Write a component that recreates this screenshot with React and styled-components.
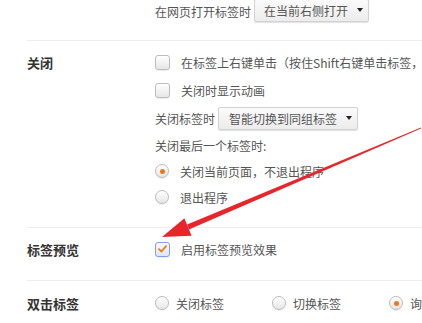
import styled, { createGlobalStyle, css } from "styled-components";

const GlobalStyle = createGlobalStyle`
html, body {
    margin: 0;
    padding: 0;
    background: #ffffff;
    overflow: hidden;
}
body {
    font-family: "Noto Sans CJK SC", "Noto Sans", sans-serif;
    font-size: 12px;
    color: #555;
}
`;

const Page = styled.div`
position: relative;
width: 422px;
height: 323px;
overflow: hidden;
white-space: nowrap;
`;

const Section = styled.div`
display: grid;
grid-template-columns: 128px 1fr;
margin-left: 27px;
padding: ${(p) => p.$pad || "7px 0 17px"};
border-top: ${(p) => (p.$first ? "none" : "1px solid #ededed")};
`;

const Label = styled.div`
height: 28px;
display: flex;
align-items: center;
font-size: 13px;
font-weight: bold;
color: #333;
`;

const Options = styled.div`
display: flex;
flex-direction: column;
min-width: 0;
`;

const Row = styled.div`
display: flex;
align-items: center;
height: ${(p) => p.$h || 28}px;
gap: ${(p) => p.$gap || 0}px;
`;

const Text = styled.span`
color: #555;
font-size: 12px;
`;

const Select = styled.div`
display: inline-flex;
align-items: center;
box-sizing: border-box;
height: 23px;
padding: 0 5px 0 ${(p) => p.$padLeft || 9}px;
margin-top: ${(p) => p.$top || 0}px;
gap: 9px;
border: 1px solid #d2d2d2;
border-radius: 2px;
background: linear-gradient(#fbfbfb, #ececec);
box-shadow: 0 1px 1px rgba(0, 0, 0, 0.12);
color: #555;
`;

const Caret = styled.span`
width: 0;
height: 0;
border-left: 3.5px solid transparent;
border-right: 3.5px solid transparent;
border-top: 4px solid #222;
`;

const Option = styled.label`
display: flex;
align-items: center;
gap: ${(p) => p.$gap || 11}px;
`;

const boxBase = css`
box-sizing: border-box;
flex: none;
background: linear-gradient(#ffffff, #e6e6e6);
box-shadow: inset 0 1px 1px rgba(255, 255, 255, 0.8), 0 1px 1px rgba(0, 0, 0, 0.08);
`;

const Check = styled.span`
${boxBase};
width: 15px;
height: 15px;
border-radius: 3px;
border: 1px solid ${(p) => (p.$on ? "#7e9fe0" : "#bcbcbc")};
display: flex;
align-items: center;
justify-content: center;
${(p) => p.$on && "background: linear-gradient(#f4f7fd, #dfe7f7);"}
`;

const Radio = styled.span`
${boxBase};
width: 14px;
height: 14px;
border-radius: 50%;
border: 1px solid #bcbcbc;
display: flex;
align-items: center;
justify-content: center;
&::after {
    content: "";
    width: 5px;
    height: 5px;
    border-radius: 50%;
    background: ${(p) => (p.$on ? "#f07818" : "transparent")};
}
`;

const Arrow = styled.svg`
position: absolute;
left: 0;
top: 0;
pointer-events: none;
`;

const CheckMark = () => (
    <svg width="9" height="8" viewBox="0 0 9 8">
        <path d="M1 4.2 L3.5 6.5 L8 1.2" fill="none" stroke="#f07818" strokeWidth="1.8" strokeLinecap="round" strokeLinejoin="round" />
    </svg>
);

const CheckOption = ({ on, children }) => (
    <Option>
        <Check $on={on}>{on && <CheckMark />}</Check>
        <Text>{children}</Text>
    </Option>
);

const RadioOption = ({ on, gap, children }) => (
    <Option $gap={gap}>
        <Radio $on={on} />
        <Text>{children}</Text>
    </Option>
);

const App = () => {
    return (
        <Page>
            <GlobalStyle />
            <Section $first $pad="0 0 18px">
                <div />
                <Options>
                    <Row $h={22} $gap={3}>
                        <Text>在网页打开标签时</Text>
                        <Select $top={-2}>
                            在当前右侧打开
                            <Caret />
                        </Select>
                    </Row>
                </Options>
            </Section>

            <Section>
                <Label>关闭</Label>
                <Options>
                    <Row>
                        <CheckOption>在标签上右键单击（按住Shift右键单击标签，可弹出菜单）</CheckOption>
                    </Row>
                    <Row>
                        <CheckOption>关闭时显示动画</CheckOption>
                    </Row>
                    <Row $gap={3}>
                        <Text>关闭标签时</Text>
                        <Select $padLeft={10}>
                            智能切换到同组标签
                            <Caret />
                        </Select>
                    </Row>
                    <Row $h={26}>
                        <Text>关闭最后一个标签时:</Text>
                    </Row>
                    <Row $h={26}>
                        <RadioOption on>关闭当前页面，不退出程序</RadioOption>
                    </Row>
                    <Row $h={26}>
                        <RadioOption>退出程序</RadioOption>
                    </Row>
                </Options>
            </Section>

            <Section>
                <Label>标签预览</Label>
                <Options>
                    <Row>
                        <CheckOption on>启用标签预览效果</CheckOption>
                    </Row>
                </Options>
            </Section>

            <Section $pad="8px 0 8px">
                <Label>双击标签</Label>
                <Options>
                    <Row $gap={48}>
                        <RadioOption gap={7}>关闭标签</RadioOption>
                        <RadioOption gap={7}>切换标签</RadioOption>
                        <RadioOption gap={7} on>询问我</RadioOption>
                    </Row>
                </Options>
            </Section>

            <Arrow width="422" height="323" viewBox="0 0 422 323">
                <polygon points="421,127.6 421,128.6 188.9,229.6 187.1,224.4" fill="#e8252b" />
                <polygon points="162,237 184.4,218.2 191.6,235.8" fill="#e8252b" />
            </Arrow>
        </Page>
    );
};

export default App;
